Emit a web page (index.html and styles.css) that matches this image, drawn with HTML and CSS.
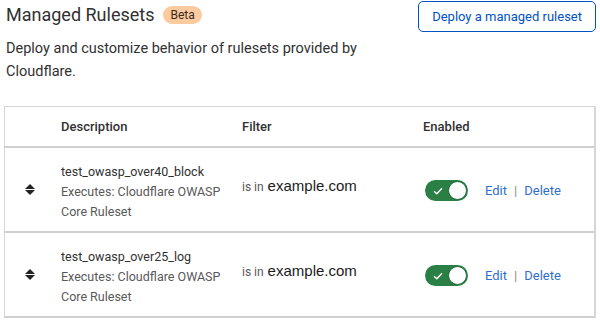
FILE: index.html
```html
<!DOCTYPE html>
<html lang="en">
<head>
  <meta charset="UTF-8" />
  <title>Managed Rulesets</title>
  <link rel="stylesheet" href="styles.css">
</head>
<body>
  <div class="page">
    <div class="page-head">
      <div class="head-text">
        <h1>Managed Rulesets <span class="badge">Beta</span></h1>
        <p class="intro">Deploy and customize behavior of rulesets provided by Cloudflare.</p>
      </div>
      <button class="btn-outline">Deploy a managed ruleset</button>
    </div>

    <div class="rules-table">
      <div class="row head-row">
        <div class="cell sort"></div>
        <div class="cell desc">Description</div>
        <div class="cell filter">Filter</div>
        <div class="cell enabled">Enabled</div>
      </div>

      <div class="row">
        <div class="cell sort"><span class="sort-icon"></span></div>
        <div class="cell desc">
          <div class="rule-name">test_owasp_over40_block</div>
          <div class="rule-sub">Executes: Cloudflare OWASP Core Ruleset</div>
        </div>
        <div class="cell filter"><span class="op">is in</span> <span class="val">example.com</span></div>
        <div class="cell enabled">
          <span class="toggle on">
            <svg class="check" width="10" height="8" viewBox="0 0 10 8"><path d="M1 4.2 L3.8 6.8 L9 1.2" fill="none" stroke="#fff" stroke-width="1.4"/></svg>
            <span class="knob"></span>
          </span>
          <span class="links"><a href="#">Edit</a><span class="sep">|</span><a href="#">Delete</a></span>
        </div>
      </div>

      <div class="row">
        <div class="cell sort"><span class="sort-icon"></span></div>
        <div class="cell desc">
          <div class="rule-name">test_owasp_over25_log</div>
          <div class="rule-sub">Executes: Cloudflare OWASP Core Ruleset</div>
        </div>
        <div class="cell filter"><span class="op">is in</span> <span class="val">example.com</span></div>
        <div class="cell enabled">
          <span class="toggle on">
            <svg class="check" width="10" height="8" viewBox="0 0 10 8"><path d="M1 4.2 L3.8 6.8 L9 1.2" fill="none" stroke="#fff" stroke-width="1.4"/></svg>
            <span class="knob"></span>
          </span>
          <span class="links"><a href="#">Edit</a><span class="sep">|</span><a href="#">Delete</a></span>
        </div>
      </div>
    </div>
  </div>
</body>
</html>
```

FILE: styles.css
```css
:root {
  --text: #313131;
  --muted: #595959;
  --blue: #0051c3;
  --link: #2f6fcb;
  --green: #2a7f45;
}

* {
  box-sizing: border-box;
  margin: 0;
  padding: 0;
}

body {
  font-family: Roboto, 'Noto Sans', sans-serif;
  color: var(--text);
  background: #fff;
}

.page {
  padding: 1px 4px 0 4px;
}

.page-head {
  display: flex;
  justify-content: space-between;
  align-items: flex-start;
}

.head-text {
  padding-left: 2px;
}

h1 {
  font-size: 18px;
  font-weight: 400;
  line-height: 28px;
  display: flex;
  align-items: center;
  gap: 9px;
}

.badge {
  background: #fbcb9f;
  color: #3a2a1c;
  font-size: 12px;
  line-height: 18px;
  padding: 0 7px;
  border-radius: 10px;
}

.intro {
  font-size: 14.5px;
  line-height: 23px;
  width: 360px;
  margin-top: 8px;
}

.btn-outline {
  font-family: inherit;
  font-size: 13px;
  color: var(--blue);
  background: #fff;
  border: 1px solid var(--blue);
  border-radius: 5px;
  height: 31px;
  padding: 0 13px;
  cursor: pointer;
}

.rules-table {
  margin-top: 23px;
  border: 2px solid #d6d6d6;
  border-bottom: none;
  border-top-width: 1px;
  border-left-width: 1px;
}

.row {
  display: flex;
  align-items: center;
  border-bottom: 2px solid #cfcfcf;
  height: 85px;
}

.head-row {
  height: 41px;
  font-size: 13px;
  font-weight: 500;
}

.cell.sort {
  width: 56px;
  padding-left: 20px;
}

.cell.desc {
  width: 181px;
}

.cell.filter {
  width: 181px;
}

.sort-icon {
  display: block;
  width: 10px;
  height: 11px;
  position: relative;
}

.sort-icon::before,
.sort-icon::after {
  content: "";
  position: absolute;
  left: 0;
  border-left: 5px solid transparent;
  border-right: 5px solid transparent;
}

.sort-icon::before {
  top: 0;
  border-bottom: 5px solid #222;
}

.sort-icon::after {
  bottom: 0;
  border-top: 5px solid #222;
}

.row .cell.desc {
  padding-top: 4px;
}

.head-row .cell.desc {
  padding-top: 0;
}

.rule-name {
  font-size: 12.5px;
  line-height: 21px;
  color: var(--text);
}

.rule-sub {
  font-size: 12.5px;
  line-height: 20px;
  color: var(--muted);
}

.row .cell.filter {
  margin-top: -8px;
}

.head-row .cell.filter {
  margin-top: 0;
}

.op {
  font-size: 12px;
  color: var(--muted);
}

.val {
  font-family: 'Liberation Sans', Arial, sans-serif;
  font-size: 15px;
  color: #1c1c1c;
}

.cell.enabled {
  display: flex;
  align-items: center;
  gap: 17px;
  padding-left: 2px;
  padding-top: 2px;
}

.head-row .cell.enabled {
  padding-left: 0;
  padding-top: 0;
}

.toggle {
  display: flex;
  align-items: center;
  justify-content: space-between;
  width: 43px;
  height: 21px;
  border-radius: 11px;
  background: var(--green);
  padding: 0 1px 0 8px;
}

.knob {
  width: 19px;
  height: 19px;
  border-radius: 50%;
  background: #fff;
  border: 1px solid #1d6a36;
}

.links {
  font-size: 13px;
  display: flex;
  align-items: center;
  gap: 7px;
}

.links a {
  color: var(--link);
  text-decoration: none;
}

.sep {
  color: #8a8a8a;
}
```
